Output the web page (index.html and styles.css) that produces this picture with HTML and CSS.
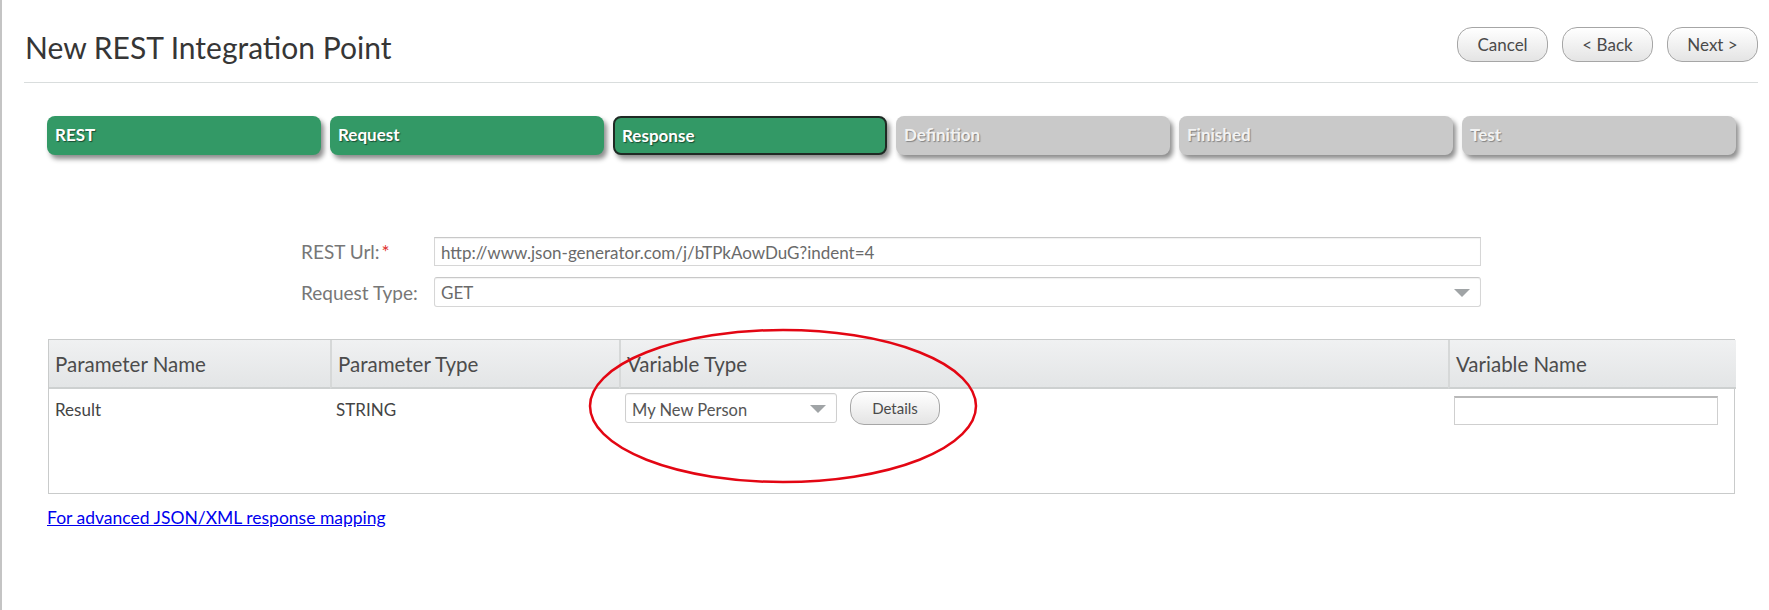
FILE: index.html
```html
<!DOCTYPE html>
<html lang="en">
<head>
    <meta charset="UTF-8">
    <title>New REST Integration Point</title>
    <link rel="stylesheet" href="styles.css">
</head>
<body>
    <!-- page header with wizard buttons -->
    <header class="header">
        <h1 class="title">New REST Integration Point</h1>
        <div class="actions">
            <button class="btn">Cancel</button>
            <button class="btn">&lt; Back</button>
            <button class="btn">Next &gt;</button>
        </div>
    </header>

    <!-- wizard steps -->
    <nav class="steps">
        <div class="step done">REST</div>
        <div class="step done">Request</div>
        <div class="step done current">Response</div>
        <div class="step">Definition</div>
        <div class="step">Finished</div>
        <div class="step">Test</div>
    </nav>

    <section class="form">
        <label class="form-label">REST Url:<span class="req">*</span></label>
        <div class="field">http://www.json-generator.com/j/bTPkAowDuG?indent=4</div>
        <label class="form-label">Request Type:</label>
        <div class="field select">GET</div>
    </section>

    <section class="params">
        <div class="grid">
            <div class="th">Parameter Name</div>
            <div class="th">Parameter Type</div>
            <div class="th">Variable Type</div>
            <div class="th">Variable Name</div>

            <div class="td">Result</div>
            <div class="td">STRING</div>
            <div class="td var-type">
                <div class="field select small">My New Person</div>
                <button class="btn details">Details</button>
            </div>
            <div class="td"><div class="name-input"></div></div>
        </div>

        <!-- red annotation round the variable type -->
        <svg class="mark" width="392" height="158" viewBox="0 0 392 158">
            <ellipse cx="196" cy="79" rx="193" ry="76" fill="none" stroke="#e30613" stroke-width="2.5"/>
        </svg>
    </section>

    <a class="advanced" href="#">For advanced JSON/XML response mapping</a>
</body>
</html>
```

FILE: styles.css
```css
body {
    margin: 0;
    min-height: 610px;
    border-left: 2px solid #c4c4c4;
    background: #fff;
    font-family: "Lato", "Open Sans", sans-serif;
    color: #444;
}

.header {
    display: flex;
    justify-content: space-between;
    align-items: flex-start;
    height: 82px;
    margin: 0 11px 0 22px;
    border-bottom: 1px solid #d9dddd;
}

.title {
    margin: 29px 0 0 1px;
    font-size: 30px;
    font-weight: normal;
    line-height: 36px;
    color: #363636;
}

.actions {
    display: flex;
    gap: 14px;
    margin-top: 27px;
}

.btn {
    height: 35px;
    width: 91px;
    padding: 0;
    border: 1px solid #a6a6a6;
    border-radius: 15px;
    background: linear-gradient(to bottom, #ffffff, #e4e4e4);
    font-family: inherit;
    font-size: 17px;
    color: #4a4a4a;
}

.steps {
    display: flex;
    gap: 9px;
    margin: 33px 0 0 45px;
}

.step {
    box-sizing: border-box;
    width: 274px;
    height: 39px;
    padding: 8px 0 0 8px;
    border-radius: 8px;
    background: #c9c9c9;
    box-shadow: 3px 4px 5px rgba(0, 0, 0, 0.45);
    font-size: 17px;
    font-weight: bold;
    color: #f2f2f2;
    text-shadow: 1px 1px 1px rgba(0, 0, 0, 0.35);
}

.step.done {
    background: #339966;
    color: #fff;
    text-shadow: 1px 1px 1px rgba(0, 0, 0, 0.5);
}

.step.current {
    border: 2px solid #1f2a24;
    padding: 7px 0 0 7px;
}

.form {
    display: grid;
    grid-template-columns: 133px 1047px;
    row-gap: 11px;
    align-items: center;
    margin: 82px 0 0 299px;
}

.form-label {
    font-size: 19px;
    color: #777;
}

.req {
    color: #e0302c;
    margin-left: 2px;
}

.field {
    box-sizing: border-box;
    height: 29px;
    padding: 4px 0 0 6px;
    border: 1px solid #d6d6d6;
    border-top-color: #c8c8c8;
    box-shadow: inset 0 1px 1px rgba(0, 0, 0, 0.06);
    font-size: 17px;
    color: #6a6a6a;
}

.select {
    position: relative;
    height: 30px;
    border-radius: 3px;
}

.select::after {
    content: "";
    position: absolute;
    right: 10px;
    top: 11px;
    border-left: 8px solid transparent;
    border-right: 8px solid transparent;
    border-top: 8px solid #a0a4a6;
}

.params {
    position: relative;
    margin: 32px 0 0 46px;
    width: 1687px;
}

.grid {
    display: grid;
    grid-template-columns: 281px 289px 829px 288px;
    grid-template-rows: 49px 104px;
    border: 1px solid #c9cbcb;
    box-sizing: border-box;
}

.th {
    padding: 12px 0 0 6px;
    border-left: 2px solid #d6d8d8;
    border-bottom: 2px solid #cdd0d0;
    background: linear-gradient(to bottom, #f0f1f2, #e3e5e6);
    font-size: 20.5px;
    color: #4c4c4c;
}

.th:first-child {
    border-left: none;
}

.th:last-child {
    border-right: 3px double #d0d2d2;
}

.td {
    padding: 10px 0 0 6px;
    font-size: 17px;
    color: #444;
}

.var-type {
    display: flex;
    align-items: flex-start;
    gap: 13px;
    padding-top: 2px;
}

.select.small {
    width: 212px;
    margin-top: 2px;
    padding-top: 6px;
    font-size: 16.5px;
    color: #555;
    border-color: #cfcfcf;
}

.details {
    width: 90px;
    height: 34px;
    font-size: 15px;
    border-radius: 14px;
}

.name-input {
    width: 264px;
    height: 29px;
    margin-top: -3px;
    box-sizing: border-box;
    border: 1px solid #cfcfcf;
    border-top: 2px solid #b9b9b9;
}

.mark {
    position: absolute;
    left: 539px;
    top: -12px;
}

.advanced {
    display: inline-block;
    margin: 13px 0 0 45px;
    font-size: 17.5px;
    color: #0000ee;
}
```
